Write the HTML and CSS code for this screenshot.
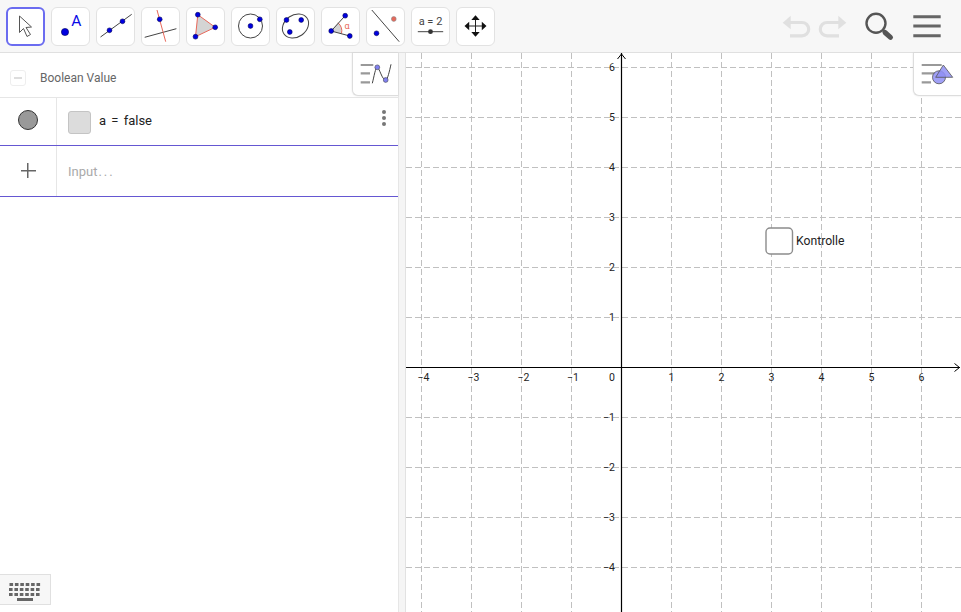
FILE: index.html
```html
<!DOCTYPE html>
<html lang="de">
<head>
  <meta charset="UTF-8">
  <title>GeoGebra</title>
  <link rel="stylesheet" href="styles.css">
</head>
<body>

<div class="toolbar">
  <div class="tools">
    <div class="tool active">
      <svg viewBox="0 0 37 37"><path class="cursor" d="M12.5 8 L24.5 19 L19 19.5 L23.5 26.5 L20 28.5 L16.5 20.5 L12.5 24.5 Z"/></svg>
    </div>
    <div class="tool">
      <svg viewBox="0 0 39 39"><circle class="pt big" cx="14" cy="25" r="3.6"/><text class="pt-name" x="25.3" y="19">A</text></svg>
    </div>
    <div class="tool">
      <svg viewBox="0 0 39 39"><line class="ln" x1="4.5" y1="30" x2="35.7" y2="7.3"/><circle class="pt" cx="13.5" cy="23.3" r="2.4"/><circle class="pt" cx="26.5" cy="14.3" r="2.4"/></svg>
    </div>
    <div class="tool">
      <svg viewBox="0 0 39 39"><line class="ln" x1="3.7" y1="30.3" x2="35.4" y2="21.7"/><line class="red" x1="16" y1="3" x2="24.7" y2="34.7"/><circle class="pt" cx="18.7" cy="12.3" r="2.4"/></svg>
    </div>
    <div class="tool">
      <svg viewBox="0 0 39 39"><polygon class="tri" points="11.8,7.7 29.2,20.3 9.5,29.7"/><circle class="pt" cx="11.8" cy="7.7" r="2.4"/><circle class="pt" cx="29.2" cy="20.3" r="2.4"/><circle class="pt" cx="9.5" cy="29.7" r="2.4"/></svg>
    </div>
    <div class="tool">
      <svg viewBox="0 0 39 39"><circle class="ln" cx="19.5" cy="19" r="12"/><circle class="pt" cx="19.5" cy="19" r="2.4"/><circle class="pt" cx="28.8" cy="12.3" r="2.4"/></svg>
    </div>
    <div class="tool">
      <svg viewBox="0 0 39 39"><ellipse class="ln" cx="19.5" cy="19" rx="14" ry="11" transform="rotate(-35 19.5 19)"/><circle class="pt" cx="10.5" cy="13" r="2.4"/><circle class="pt" cx="25.2" cy="13" r="2.4"/><circle class="pt" cx="13.8" cy="25" r="2.4"/></svg>
    </div>
    <div class="tool">
      <svg viewBox="0 0 39 39"><path class="wedge" d="M10.2 24 L17 15.8 A11 11 0 0 1 20.5 26.5 Z"/><path class="red" d="M17 15.8 A11 11 0 0 1 20.5 26.5"/><line class="ln" x1="10.2" y1="24" x2="24.2" y2="8.7"/><line class="ln" x1="10.2" y1="24" x2="28.8" y2="29"/><text class="alpha" x="23.5" y="22">α</text><circle class="pt" cx="10.2" cy="24" r="2.4"/><circle class="pt" cx="24.2" cy="8.7" r="2.4"/><circle class="pt" cx="28.8" cy="29" r="2.4"/></svg>
    </div>
    <div class="tool">
      <svg viewBox="0 0 39 39"><line class="ln" x1="5.8" y1="3" x2="33.2" y2="34.7"/><circle class="pt" cx="10.5" cy="26.3" r="2.4"/><circle class="pt-red" cx="27.8" cy="12" r="2.4"/></svg>
    </div>
    <div class="tool">
      <svg viewBox="0 0 39 39"><text class="slider-label" x="19.5" y="18">a = 2</text><line class="ln" x1="6.8" y1="24.7" x2="32.2" y2="24.7"/><circle class="knob" cx="19.5" cy="24.7" r="2.4"/></svg>
    </div>
    <div class="tool">
      <svg viewBox="0 0 39 39"><path class="move-line" d="M19.5 10 V28 M10.5 19 H28.5"/><path class="move-head" d="M19.5 8.3 L23.7 13 H15.3 Z M19.5 29.7 L23.7 25 H15.3 Z M8.5 19 L13.2 14.8 V23.2 Z M30.5 19 L25.8 14.8 V23.2 Z"/></svg>
    </div>
  </div>

  <div class="actions">
    <svg class="undo" viewBox="0 0 31 38"><path class="hist-body" d="M9 15.5 H21 a6.7 6.7 0 0 1 0 13.4 H9"/><path class="hist-head" d="M1.7 15.7 L9.7 8.7 V22.3 Z"/></svg>
    <svg class="redo" viewBox="0 0 31 38"><g transform="matrix(-1 0 0 1 31 0)"><path class="hist-body" d="M9 15.5 H21 a6.7 6.7 0 0 1 0 13.4 H9"/><path class="hist-head" d="M1.7 15.7 L9.7 8.7 V22.3 Z"/></g></svg>
    <svg class="search" viewBox="0 0 32 38"><circle class="lens" cx="13" cy="16.3" r="9.5"/><line class="lens-stem" x1="20" y1="23.5" x2="22" y2="25.5"/><line class="lens-handle" x1="22" y1="25.5" x2="27.5" y2="30.3"/></svg>
    <svg class="menu" viewBox="0 0 32 38"><path class="menu-bars" d="M2.3 9.7 H29.7 M2.3 19 H29.7 M2.3 28.7 H29.7"/></svg>
  </div>
</div>

<div class="main">
  <div class="algebra">
    <div class="stylebar-btn algebra-style">
      <svg viewBox="0 0 46 43"><path class="bars" d="M8.7 12 H21.3 M8.7 20.3 H18 M8.7 29.3 H18"/><path class="ln" d="M20.3 30.3 C22 24 23.5 14 25.3 14.3 C27.5 15 30 27 33.7 27 C35.5 27 37.5 18 39 11.3"/><circle class="pt-soft" cx="25.3" cy="14.3" r="2.4"/><circle class="pt-soft" cx="33.7" cy="27" r="2.4"/></svg>
    </div>

    <div class="group-head">
      <span class="collapse"></span>
      <span class="group-title">Boolean Value</span>
    </div>

    <div class="row row-item">
      <div class="marble-col"><span class="marble"></span></div>
      <div class="row-body">
        <span class="check-box"></span>
        <span class="formula">a = false</span>
        <span class="more"><i></i><i></i><i></i></span>
      </div>
    </div>

    <div class="row row-input">
      <div class="marble-col"><span class="plus"></span></div>
      <div class="row-body"><span class="placeholder">Input<span class="dots">...</span></span></div>
    </div>

    <div class="keyboard-btn">
      <svg viewBox="0 0 50 30"><path class="keys" d="M9.5 9.5 H41 M9 14.5 H41 M9 19.5 H41"/><rect class="space" x="17" y="23" width="16" height="3"/></svg>
    </div>
  </div>

  <div class="splitter"></div>

  <div class="graphics">
    <svg class="plot" viewBox="406 53 555 559">
      <path class="grid" d="M421.5 53V612 M471.5 53V612 M521.5 53V612 M571.5 53V612 M671.5 53V612 M721.5 53V612 M771.5 53V612 M821.5 53V612 M871.5 53V612 M921.5 53V612"/>
      <path class="grid" d="M406 67.5H961 M406 117.5H961 M406 167.5H961 M406 217.5H961 M406 267.5H961 M406 317.5H961 M406 417.5H961 M406 467.5H961 M406 517.5H961 M406 567.5H961"/>
      <path class="axis" d="M621.5 53V612 M406 367.5H960"/>
      <path class="axis-tip" d="M617.5 59 L621.5 54 L625.5 59 M954.5 363.5 L959.5 367.5 L954.5 371.5"/>

      <g class="x-labels">
        <text x="423.5" y="381">−4</text>
        <text x="473.5" y="381">−3</text>
        <text x="523.5" y="381">−2</text>
        <text x="573" y="381">−1</text>
        <text x="671.5" y="381">1</text>
        <text x="721.5" y="381">2</text>
        <text x="771.5" y="381">3</text>
        <text x="821.5" y="381">4</text>
        <text x="871.5" y="381">5</text>
        <text x="921.5" y="381">6</text>
      </g>
      <g class="y-labels">
        <text x="615" y="381">0</text>
        <text x="615" y="71">6</text>
        <text x="615" y="121">5</text>
        <text x="615" y="171">4</text>
        <text x="615" y="221">3</text>
        <text x="615" y="271">2</text>
        <text x="615" y="321">1</text>
        <text x="615" y="421">−1</text>
        <text x="615" y="471">−2</text>
        <text x="615" y="521">−3</text>
        <text x="615" y="571">−4</text>
      </g>

      <rect class="canvas-check" x="766" y="228" width="26.5" height="26" rx="4"/>
      <text class="canvas-label" x="796" y="245">Kontrolle</text>
    </svg>

    <div class="stylebar-btn graphics-style">
      <svg viewBox="0 0 48 43"><path class="bars" d="M8.7 12 H28.7 M8.7 20.3 H22 M8.7 29.3 H18"/><circle class="shape" cx="26" cy="24.3" r="6.5"/><polygon class="shape" points="30.3,12 39.7,24.3 22.7,24.3"/></svg>
    </div>
  </div>
</div>

</body>
</html>
```

FILE: styles.css
```css
* {
  box-sizing: border-box;
  margin: 0;
  padding: 0;
}

html, body {
  height: 100%;
  overflow: hidden;
}

body {
  background: #fff;
  color: #222;
  font-family: Roboto, sans-serif;
  display: flex;
  flex-direction: column;
}

svg {
  display: block;
}

/* toolbar */
.toolbar {
  height: 53px;
  flex-shrink: 0;
  background: #f7f7f7;
  border-bottom: 1px solid #e0e0e0;
  display: flex;
  justify-content: space-between;
  padding: 7px 18px 0 5.5px;
}

.tools {
  display: flex;
  gap: 6px;
}

.tool {
  width: 39px;
  height: 39px;
  background: #fff;
  border: 1px solid #e2e2e2;
  border-radius: 6px;
}

.tool svg {
  width: 39px;
  height: 39px;
  margin: -1px;
}

.tool.active {
  width: 39px;
  border: 2px solid #6b6cf0;
}

.tool.active svg {
  width: 37px;
  height: 37px;
  margin: -1px 0 0 -1px;
}

.cursor {
  fill: #fff;
  stroke: #555;
  stroke-width: 1;
}

.pt {
  fill: #0000e0;
  stroke: #00005a;
  stroke-width: 0.6;
}

.pt-red {
  fill: #e8685a;
  stroke: #888;
  stroke-width: 0.6;
}

.pt-soft {
  fill: #8080f0;
  stroke: #445;
  stroke-width: 0.6;
}

.pt-name {
  fill: #0a0ae6;
  font-size: 15.5px;
  text-anchor: middle;
}

.ln {
  fill: none;
  stroke: #444;
  stroke-width: 1;
}

.red {
  fill: none;
  stroke: #e8685a;
  stroke-width: 1;
}

.tri {
  fill: #d4d4d4;
  stroke: #e8685a;
  stroke-width: 1;
}

.wedge {
  fill: #d4d4d4;
}

.alpha {
  fill: #e8685a;
  font-size: 9px;
}

.slider-label {
  fill: #444;
  font-size: 11px;
  text-anchor: middle;
}

.knob {
  fill: #333;
}

.move-line {
  fill: none;
  stroke: #222;
  stroke-width: 1;
}

.move-head {
  fill: #111;
}

.actions {
  display: flex;
  height: 38px;
}

.undo,
.redo {
  width: 31px;
  height: 38px;
}

.redo {
  margin-left: 5px;
}

.search {
  width: 32px;
  height: 38px;
  margin-left: 15px;
}

.menu {
  width: 32px;
  height: 38px;
  margin-left: 16px;
}

.hist-body {
  fill: none;
  stroke: #e0e0e0;
  stroke-width: 3.2;
}

.hist-head {
  fill: #e0e0e0;
}

.lens {
  fill: none;
  stroke: #555;
  stroke-width: 2.4;
}

.lens-stem {
  stroke: #555;
  stroke-width: 2;
}

.lens-handle {
  stroke: #555;
  stroke-width: 5;
  stroke-linecap: round;
}

.menu-bars {
  fill: none;
  stroke: #666;
  stroke-width: 3;
}

/* main area */
.main {
  flex: 1;
  display: flex;
  min-height: 0;
}

.algebra {
  width: 398px;
  position: relative;
  flex-shrink: 0;
}

.splitter {
  width: 8px;
  flex-shrink: 0;
  background: #f5f5f5;
  border-left: 1px solid #e6e6e6;
  border-right: 1px solid #e2e2e2;
}

.graphics {
  flex: 1;
  position: relative;
  min-width: 0;
}

.plot {
  width: 555px;
  height: 559px;
}

/* floating style bar buttons */
.stylebar-btn {
  position: absolute;
  top: 0;
  right: 0;
  height: 43px;
  background: #fff;
  border-left: 1px solid #ddd;
  border-bottom: 1px solid #ddd;
  border-bottom-left-radius: 6px;
  box-shadow: 0 0 2px rgba(0, 0, 0, 0.12);
  z-index: 2;
}

.algebra-style {
  width: 46px;
}

.graphics-style {
  width: 48px;
}

.stylebar-btn svg {
  height: 43px;
  margin-left: -1px;
}

.algebra-style svg {
  width: 46px;
}

.graphics-style svg {
  width: 48px;
}

.bars {
  fill: none;
  stroke: #999;
  stroke-width: 2.2;
}

.shape {
  fill: #8f8ff5;
  stroke: #555;
  stroke-width: 0.8;
  fill-opacity: 0.85;
}

/* algebra rows */
.group-head {
  height: 45px;
  border-bottom: 1px solid #e6e6e6;
  display: flex;
  align-items: center;
  padding-left: 10px;
  padding-top: 5px;
}

.collapse {
  width: 16px;
  height: 16px;
  border: 1px solid #eee;
  border-radius: 3px;
  position: relative;
}

.collapse::after {
  content: "";
  position: absolute;
  left: 3px;
  right: 3px;
  top: 6px;
  height: 2px;
  background: #ddd;
}

.group-title {
  margin-left: 14px;
  font-size: 12px;
  color: #666;
}

.row {
  display: flex;
  border-bottom: 1px solid #6557d2;
}

.row-item {
  height: 48px;
}

.row-input {
  height: 51px;
}

.marble-col {
  width: 57px;
  flex-shrink: 0;
  border-right: 1px solid #e6e6e6;
  display: flex;
  align-items: center;
  justify-content: center;
}

.row-item .marble-col {
  padding-bottom: 3px;
}

.row-input .marble-col {
  padding-bottom: 1px;
}

.marble {
  width: 20px;
  height: 20px;
  border-radius: 50%;
  background: #999;
  border: 1px solid #333;
}

.plus {
  width: 15px;
  height: 15px;
  background:
    linear-gradient(#666, #666) center / 15px 1.5px no-repeat,
    linear-gradient(#666, #666) center / 1.5px 15px no-repeat;
}

.row-body {
  flex: 1;
  display: flex;
  align-items: center;
  padding-left: 11px;
  position: relative;
}

.check-box {
  width: 23px;
  height: 23px;
  margin-top: 2px;
  background: #dcdcdc;
  border: 1px solid #c4c4c4;
  border-radius: 3px;
}

.formula {
  margin-left: 8px;
  margin-bottom: 3px;
  font-size: 13px;
  color: #222;
  word-spacing: 2px;
}

.more {
  position: absolute;
  right: 12px;
  top: 12px;
  display: flex;
  flex-direction: column;
  gap: 2px;
}

.more i {
  width: 4px;
  height: 4px;
  border-radius: 50%;
  background: #777;
}

.placeholder {
  font-size: 13px;
  color: #aaa;
  padding-top: 1px;
}

.dots {
  letter-spacing: 2px;
  margin-left: 1px;
}

.keyboard-btn {
  position: absolute;
  left: 0;
  bottom: 7px;
  width: 51px;
  height: 31px;
  background: #f7f7f7;
  border: 1px solid #e0e0e0;
  border-left: none;
}

.keyboard-btn svg {
  width: 50px;
  height: 30px;
}

.keys {
  fill: none;
  stroke: #666;
  stroke-width: 3;
  stroke-dasharray: 3.6 1.8;
}

.space {
  fill: #666;
}

/* graphics view */
.grid {
  fill: none;
  stroke: #c0c0c0;
  stroke-width: 1;
  stroke-dasharray: 6 3;
}

.axis {
  fill: none;
  stroke: #000;
  stroke-width: 1.2;
}

.axis-tip {
  fill: none;
  stroke: #000;
  stroke-width: 1;
}

.x-labels text {
  font-size: 10.5px;
  fill: #222;
  text-anchor: middle;
}

.y-labels text {
  font-size: 10.5px;
  fill: #222;
  text-anchor: end;
}

.canvas-check {
  fill: #fff;
  stroke: #8c8c8c;
  stroke-width: 1.4;
}

.canvas-label {
  font-size: 12.2px;
  fill: #222;
}
```
